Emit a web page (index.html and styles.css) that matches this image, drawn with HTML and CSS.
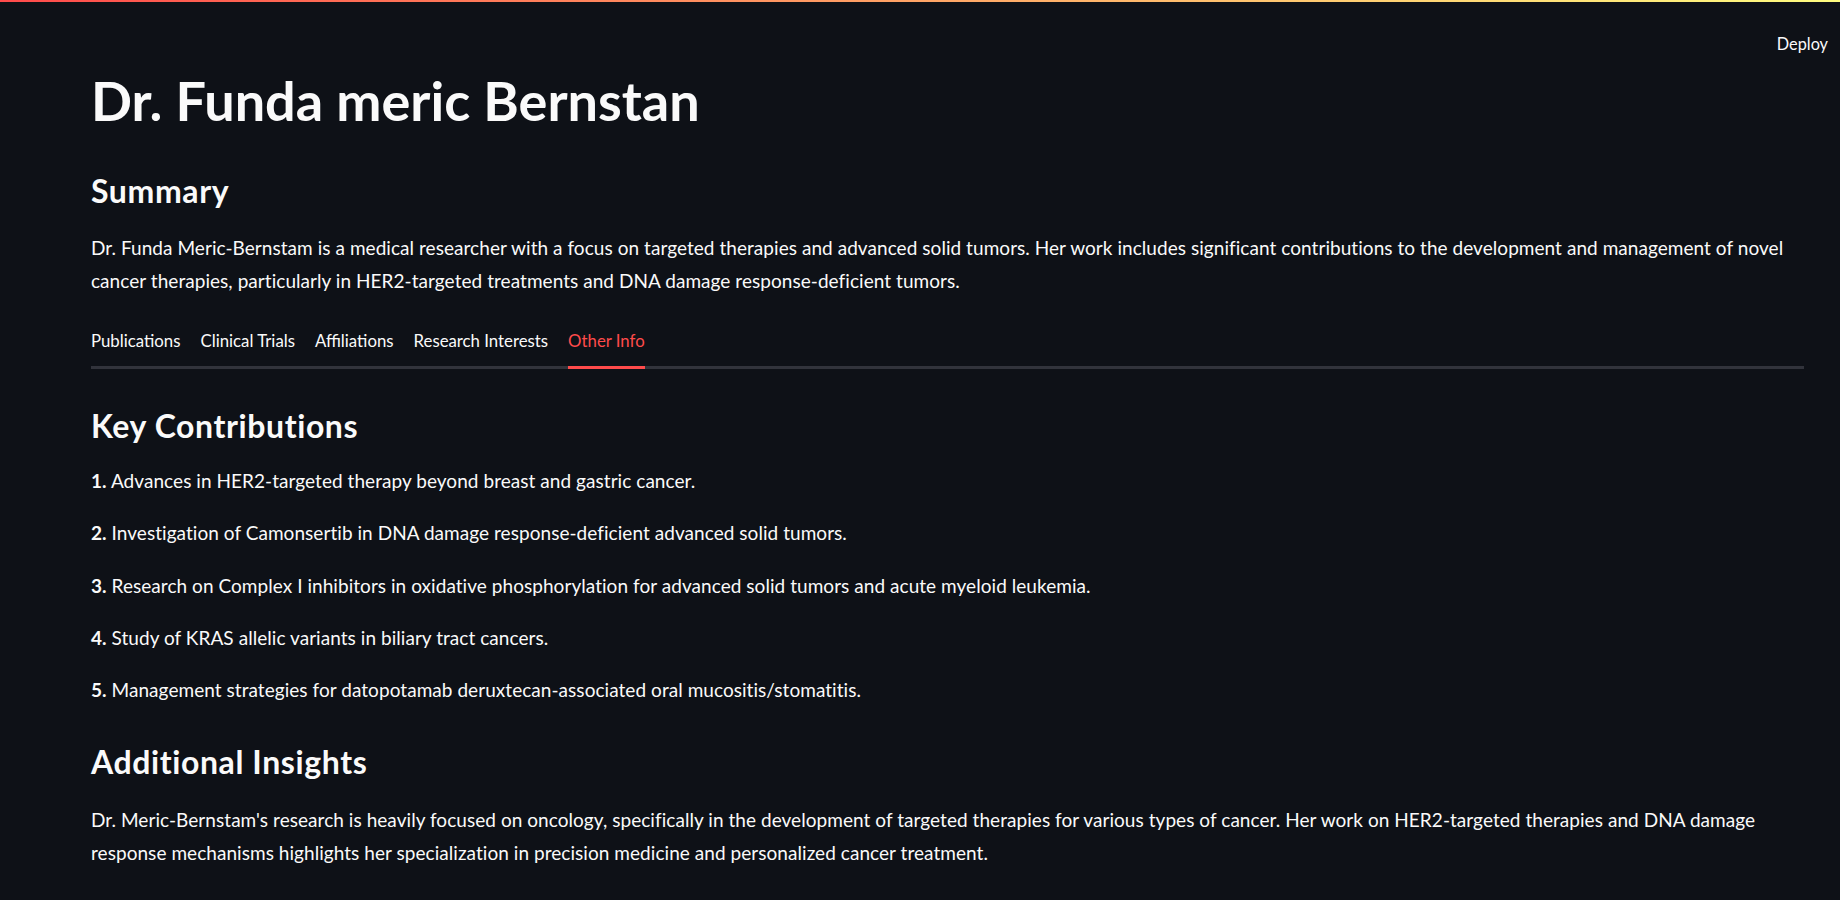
FILE: index.html
```html
<!DOCTYPE html>
<html lang="en">
<head>
<meta charset="utf-8">
<title>Dr. Funda meric Bernstan</title>
<link rel="stylesheet" href="styles.css">
</head>
<body>
<div class="decoration"></div>
<header class="topbar">
  <span class="deploy">Deploy</span>
</header>
<main class="main">
  <h1 class="title">Dr. Funda meric Bernstan</h1>
  <h3 class="heading summary-h">Summary</h3>
  <p class="para summary-p">Dr. Funda Meric-Bernstam is a medical researcher with a focus on targeted therapies and advanced solid tumors. Her work includes significant contributions to the development and management of novel cancer therapies, particularly in HER2-targeted treatments and DNA damage response-deficient tumors.</p>
  <nav class="tabs">
    <span class="tab">Publications</span>
    <span class="tab">Clinical Trials</span>
    <span class="tab">Affiliations</span>
    <span class="tab">Research Interests</span>
    <span class="tab active">Other Info</span>
  </nav>
  <h3 class="heading key-h">Key Contributions</h3>
  <div class="items">
    <p class="para item"><b>1.</b> Advances in HER2-targeted therapy beyond breast and gastric cancer.</p>
    <p class="para item"><b>2.</b> Investigation of Camonsertib in DNA damage response-deficient advanced solid tumors.</p>
    <p class="para item"><b>3.</b> Research on Complex I inhibitors in oxidative phosphorylation for advanced solid tumors and acute myeloid leukemia.</p>
    <p class="para item"><b>4.</b> Study of KRAS allelic variants in biliary tract cancers.</p>
    <p class="para item"><b>5.</b> Management strategies for datopotamab deruxtecan-associated oral mucositis/stomatitis.</p>
  </div>
  <h3 class="heading add-h">Additional Insights</h3>
  <p class="para add-p">Dr. Meric-Bernstam's research is heavily focused on oncology, specifically in the development of targeted therapies for various types of cancer. Her work on HER2-targeted therapies and DNA damage response mechanisms highlights her specialization in precision medicine and personalized cancer treatment.</p>
</main>
</body>
</html>
```
FILE: styles.css
```css
html, body {
  margin: 0;
  padding: 0;
  background: #0e1117;
  color: #fafafa;
  font-family: "Lato", "Noto Sans", sans-serif;
}
body {
  min-height: 900px;
  overflow: hidden;
}
.decoration {
  height: 2px;
  background: linear-gradient(90deg, #ff4b4b, #fffd80);
}
.topbar {
  display: flex;
  justify-content: flex-end;
  padding: 30px 12px 13px 0;
}
.deploy {
  font-size: 16.3px;
  line-height: 24px;
  color: #fafafa;
}
.main {
  padding: 0 36px 0 91px;
}
.title {
  margin: 0;
  font-size: 54px;
  line-height: 64px;
  font-weight: 700;
}
.heading {
  margin: 0;
  font-size: 32px;
  line-height: 40px;
  font-weight: 700;
  letter-spacing: 0.6px;
}
.summary-h { margin-top: 38px; }
.para {
  margin: 0;
  font-size: 19px;
  line-height: 33px;
  letter-spacing: 0.05px;
}
.summary-p { margin-top: 20px; }
.tabs {
  margin-top: 32px;
  display: flex;
  gap: 20px;
  border-bottom: 3px solid #31333b;
}
.tab {
  font-size: 16.8px;
  line-height: 24px;
  padding-bottom: 13px;
  margin-bottom: -3px;
  border-bottom: 3px solid transparent;
}
.tab.active {
  color: #ff4b4b;
  border-bottom-color: #ff4b4b;
}
.key-h { margin-top: 36.5px; }
.items {
  margin-top: 18.5px;
  display: flex;
  flex-direction: column;
  gap: 19.3px;
}
.item b { font-weight: 700; }
.add-h { margin-top: 36.2px; }
.add-p { margin-top: 21px; }
```
